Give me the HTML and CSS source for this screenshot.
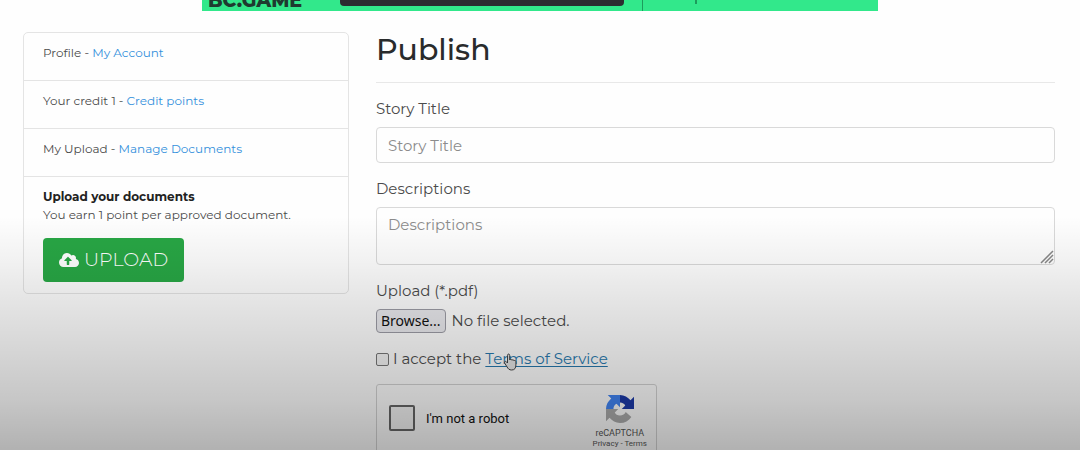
FILE: index.html
```html
<!DOCTYPE html>
<html lang="en">
<head>
<meta charset="utf-8">
<title>Publish</title>
<link rel="stylesheet" href="styles.css">
</head>
<body>
<header class="banner">
  <span class="banner-brand">BC.GAME</span>
  <span class="banner-bar"></span>
  <span class="banner-side"><span class="banner-mark"></span></span>
</header>
<div class="layout">
  <aside class="panel">
    <div class="panel-row">Profile - <a href="#">My Account</a></div>
    <div class="panel-row">Your credit 1 - <a href="#">Credit points</a></div>
    <div class="panel-row">My Upload - <a href="#">Manage Documents</a></div>
    <div class="panel-row panel-upload">
      <strong>Upload your documents</strong>
      <span>You earn 1 point per approved document.</span>
      <button class="upload-button" type="button">
        <svg class="cloud" viewBox="0 0 640 512" aria-hidden="true"><path fill="currentColor" fill-rule="evenodd" d="M538 227c4-11 6-23 6-35 0-53-43-96-96-96-20 0-38 6-53 16C367 64 315 32 256 32 168 32 96 104 96 192v8C40 220 0 273 0 336c0 80 64 144 144 144h368c71 0 128-57 128-128 0-62-44-114-102-125zM393 288h-65v112c0 9-7 16-16 16h-48c-9 0-16-7-16-16V288h-65c-14 0-21-17-11-27l105-105c6-6 16-6 22 0l105 105c10 10 3 27-11 27z"/></svg>
        UPLOAD
      </button>
    </div>
  </aside>
  <main>
    <h1>Publish</h1>
    <form class="form">
      <div class="field">
        <label for="title">Story Title</label>
        <input class="control" id="title" type="text" placeholder="Story Title">
      </div>
      <div class="field">
        <label for="descriptions">Descriptions</label>
        <div class="area">
          <textarea class="control" id="descriptions" placeholder="Descriptions"></textarea>
          <svg class="grip" viewBox="0 0 14 14" aria-hidden="true"><path d="M1 13 13 1M5 13l8-8M9 13l4-4" fill="none" stroke="#888" stroke-width="1.5"/></svg>
        </div>
      </div>
      <div class="file-field">
        <label for="file">Upload (*.pdf)</label>
        <div class="file-row">
          <input class="file-input" id="file" type="file" accept=".pdf" tabindex="-1">
          <button class="browse" type="button">Browse...</button>
          <span>No file selected.</span>
        </div>
      </div>
      <div class="accept">
        <input class="check" id="accept" type="checkbox">
        <label for="accept">I accept the <a class="terms" href="#">Terms of Service<svg class="hand" viewBox="0 0 14 18" aria-hidden="true"><path d="M4.500 10V2.300c0-1.700 2.200-1.700 2.200 0V7c.2-1 2-1 2.200.3.4-.9 2-.7 2.100.5.5-.7 1.900-.4 1.900.8V12c0 3-1.200 5-4.200 5-2.600 0-3.600-1.200-4.700-3.200L1.500 9.900c-.7-1.400 1-2.200 1.900-1.100z" fill="#e4e4e4" stroke="#444" stroke-width="1"/></svg></a></label>
      </div>
      <div class="captcha">
        <input class="captcha-check" id="robot" type="checkbox">
        <label class="captcha-label" for="robot">I'm not a robot</label>
        <div class="captcha-brand">
          <svg class="captcha-logo" viewBox="0 0 64 64" aria-hidden="true">
            <path fill="#1c3aa9" d="M64 32V4l-8 8C50 5 42 0 32 0v17c6 0 10 3 12 7l-8 8z"/>
            <path fill="#4285f4" d="M32 0H4l8 8C5 14 0 22 0 32h17c0-6 3-10 7-12l8 8z"/>
            <path fill="#ababab" d="M0 32v28l8-8c6 7 14 12 24 12 11 0 20-5 26-14L45 39c-2 5-7 8-13 8-6 0-10-3-12-7l8-8z"/>
          </svg>
          <span class="captcha-name">reCAPTCHA</span>
          <span class="captcha-links"><a href="#">Privacy</a> - <a href="#">Terms</a></span>
        </div>
      </div>
    </form>
  </main>
</div>
</body>
</html>
```
FILE: styles.css
```css
* { box-sizing: border-box; }

body {
  margin: 0;
  height: 100vh;
  overflow: hidden;
  position: relative;
  background: #fefefe;
  color: #4b4b4b;
  font: 15px/24px Montserrat, Inter, sans-serif;
}

/* Shade that darkens the lower half of the page */
body::after {
  content: "";
  position: absolute;
  inset: 0;
  pointer-events: none;
  background: linear-gradient(rgba(0, 0, 0, 0) 48%, rgba(0, 0, 0, 0.05) 58%, rgba(0, 0, 0, 0.1) 67%, rgba(0, 0, 0, 0.15) 76%, rgba(0, 0, 0, 0.22) 89%, rgba(0, 0, 0, 0.3) 100%);
}

a { color: #3490dc; text-decoration: none; }

.banner {
  width: 62.6%;
  height: 11px;
  margin: 0 auto;
  display: grid;
  grid-template-columns: 138px 284px 1fr;
  grid-template-rows: 11px;
  align-items: end;
  overflow: hidden;
  background: #32e88b;
}
.banner-brand {
  padding-left: 6px;
  color: #1f3a30;
  font: 800 19px/20px Montserrat, Inter, sans-serif;
}
.banner-bar {
  height: 6px;
  margin-bottom: 5px;
  border-radius: 0 0 4px 4px;
  background: #2c2c31;
}
.banner-side {
  height: 11px;
  margin-left: 18px;
  padding-left: 52px;
  border-left: 1px solid #1d9c5c;
}
.banner-mark {
  display: block;
  width: 2px;
  height: 4px;
  background: #1d9c5c;
}

.layout {
  display: grid;
  grid-template-columns: 12fr 25fr;
  gap: 27px;
  align-items: start;
  padding: 21px 25px 0 23px;
}

.panel {
  border: 1px solid #e4e4e4;
  border-radius: 5px;
  font-size: 12px;
  line-height: 18px;
}
.panel-row { padding: 11px 19px 18px; }
.panel-row + .panel-row { border-top: 1px solid #e4e4e4; }
.panel-upload {
  display: flex;
  flex-direction: column;
  align-items: flex-start;
  padding-bottom: 11px;
}
.panel-upload strong { color: #222; font-weight: 700; }

.upload-button {
  display: flex;
  align-items: center;
  gap: 5px;
  height: 44px;
  margin-top: 14px;
  padding: 0 16px;
  border: 0;
  border-radius: 4px;
  background: #28a745;
  color: #fff;
  font: 300 19px/24px Montserrat, Inter, sans-serif;
}
.cloud { width: 20px; height: 16px; }

h1 {
  margin: 0 0 14px;
  padding-bottom: 14px;
  border-bottom: 1px solid #e8e8e8;
  color: #292b2c;
  font-size: 30px;
  line-height: 36px;
  font-weight: 500;
}
.form, .field, .file-field { display: flex; flex-direction: column; }
.form > .field + .field { margin-top: 14px; }
label { line-height: 24px; }

.control {
  display: block;
  width: 100%;
  height: 36px;
  margin: 0;
  padding: 5px 11px;
  border: 1px solid #d9d9d9;
  border-radius: 4px;
  background: transparent;
  color: inherit;
  font: inherit;
  resize: none;
}
.field { gap: 6px; }
textarea.control { height: 58px; }
.control::placeholder { color: #8c8c8c; opacity: 1; }
.area { position: relative; }
.grip {
  position: absolute;
  right: 1px;
  bottom: 1px;
  width: 14px;
  height: 14px;
}

.file-field { margin-top: 14px; gap: 6px; }
.file-row { display: flex; align-items: center; gap: 6px; }
.file-input {
  position: absolute;
  width: 1px;
  height: 1px;
  opacity: 0;
}
.browse {
  height: 24px;
  padding: 0 4px;
  border: 1px solid #9c9ca5;
  border-radius: 4px;
  background: #e9e9ed;
  color: #111;
  font: 14px/20px "Noto Sans", sans-serif;
}

.accept { display: flex; align-items: center; gap: 4px; margin-top: 14px; }
.check, .captcha-check {
  appearance: none;
  flex: none;
  width: 13px;
  height: 13px;
  margin: 0;
  border: 1px solid #777;
  border-radius: 2px;
  background: #f4f4f4;
}
.terms { position: relative; color: #2779ae; text-decoration: underline; text-underline-offset: 2px; }
.hand { position: absolute; left: 18px; top: 4px; width: 14px; height: 18px; }

.captcha {
  display: flex;
  align-items: center;
  width: 281px;
  height: 76px;
  margin-top: 13px;
  padding: 0 9px 0 12px;
  border: 1px solid #d3d3d3;
  border-radius: 3px;
  font-family: Roboto, sans-serif;
}
.captcha-check {
  width: 26px;
  height: 26px;
  margin-bottom: 8px;
  border: 2px solid #666;
}
.captcha-label {
  flex: 1;
  margin: 0 0 6px 11px;
  color: #111;
  font-size: 13px;
}
.captcha-brand {
  display: flex;
  flex-direction: column;
  align-items: center;
  color: #555;
}
.captcha-logo { width: 28px; height: 28px; }
.captcha-name { margin-top: 4px; font-size: 9px; line-height: 12px; }
.captcha-links { font-size: 8px; line-height: 10px; }
.captcha-links a { color: inherit; }
```
